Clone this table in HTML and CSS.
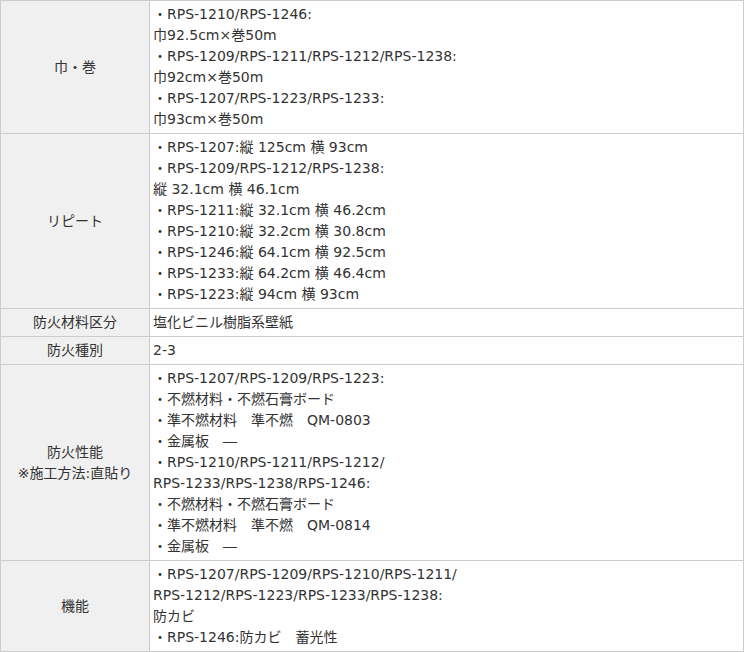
FILE: index.html
```
<!DOCTYPE html>
<html lang="ja">
<head>
<meta charset="utf-8">
<link rel="stylesheet" href="styles.css">
</head>
<body>
<table class="spec">
<tr><th>巾・巻</th><td>・RPS-1210/RPS-1246:<br>巾92.5cm×巻50m<br>・RPS-1209/RPS-1211/RPS-1212/RPS-1238:<br>巾92cm×巻50m<br>・RPS-1207/RPS-1223/RPS-1233:<br>巾93cm×巻50m</td></tr>
<tr><th>リピート</th><td>・RPS-1207:縦 125cm 横 93cm<br>・RPS-1209/RPS-1212/RPS-1238:<br>縦 32.1cm 横 46.1cm<br>・RPS-1211:縦 32.1cm 横 46.2cm<br>・RPS-1210:縦 32.2cm 横 30.8cm<br>・RPS-1246:縦 64.1cm 横 92.5cm<br>・RPS-1233:縦 64.2cm 横 46.4cm<br>・RPS-1223:縦 94cm 横 93cm</td></tr>
<tr><th>防火材料区分</th><td>塩化ビニル樹脂系壁紙</td></tr>
<tr><th>防火種別</th><td>2-3</td></tr>
<tr><th>防火性能<br>※施工方法:直貼り</th><td>・RPS-1207/RPS-1209/RPS-1223:<br>・不燃材料・不燃石膏ボード<br>・準不燃材料　準不燃　QM-0803<br>・金属板　―<br>・RPS-1210/RPS-1211/RPS-1212/<br>RPS-1233/RPS-1238/RPS-1246:<br>・不燃材料・不燃石膏ボード<br>・準不燃材料　準不燃　QM-0814<br>・金属板　―</td></tr>
<tr><th>機能</th><td>・RPS-1207/RPS-1209/RPS-1210/RPS-1211/<br>RPS-1212/RPS-1223/RPS-1233/RPS-1238:<br>防カビ<br>・RPS-1246:防カビ　蓄光性</td></tr>
</table>
</body>
</html>
```

FILE: styles.css
```
html, body {
  margin: 0;
  padding: 0;
  background: #fff;
}
.spec {
  width: 744px;
  border-collapse: collapse;
  font-family: "DejaVu Sans", "Noto Sans CJK JP", sans-serif;
  font-size: 14px;
  line-height: 21px;
  color: #333;
}
.spec th, .spec td {
  border: 1px solid #ccc;
  padding: 3px;
  vertical-align: middle;
}
.spec th {
  width: 142px;
  background: #f0f0f0;
  font-weight: normal;
  text-align: center;
}
.spec td {
  text-align: left;
}
```
